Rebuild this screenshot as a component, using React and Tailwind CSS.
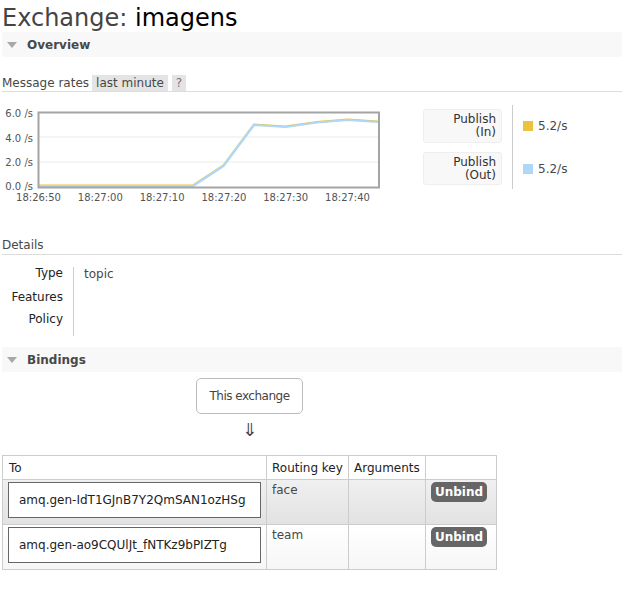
const ticks = ['18:26:50', '18:27:00', '18:27:10', '18:27:20', '18:27:30', '18:27:40'];
const yLabels = [
  { label: '6.0 /s', y: 11.6 },
  { label: '4.0 /s', y: 36.6 },
  { label: '2.0 /s', y: 60.6 },
  { label: '0.0 /s', y: 84.6 },
];
const points = [
  [39, 81], [193, 81], [223.5, 61], [254, 20], [285.5, 22], [317, 17.5], [347.5, 15], [378, 17],
];

const bindings = [
  { to: 'amq.gen-IdT1GJnB7Y2QmSAN1ozHSg', key: 'face', alt: true },
  { to: 'amq.gen-ao9CQUlJt_fNTKz9bPIZTg', key: 'team', alt: false },
];

function SectionBar({ title }) {
  return (
    <div className="h-[25px] bg-[#f8f8f8] flex items-center">
      <svg className="ml-[5px]" width="10" height="6" viewBox="0 0 10 6">
        <path d="M0 0h10L5 6z" fill="#a8a8a8" />
      </svg>
      <span className="ml-[10px] font-bold text-[#484848]">{title}</span>
    </div>
  );
}

function RateChart() {
  const line = points.map((p) => p.join(',')).join(' ');
  const lineYellow = points.map(([x, y]) => `${x},${y - 0.6}`).join(' ');
  return (
    <svg className="-ml-[2px] shrink-0" width="400" height="100" viewBox="0 0 400 100">
      <line x1="39" y1="32" x2="378" y2="32" stroke="#ebebeb" strokeWidth="1" />
      <line x1="39" y1="57" x2="378" y2="57" stroke="#ebebeb" strokeWidth="1" />
      <polyline points={lineYellow} fill="none" stroke="#edc240" strokeWidth="2" strokeLinejoin="round" />
      <polyline points={line} fill="none" stroke="#afd8f8" strokeWidth="2.2" strokeLinejoin="round" />
      <rect x="38.5" y="7.5" width="340.5" height="75" fill="none" stroke="#a4a4a4" strokeWidth="2" />
      {yLabels.map((l) => (
        <text key={l.label} x="33" y={l.y} textAnchor="end" fontSize="10" fill="#545454" fontFamily="DejaVu Sans, sans-serif">
          {l.label}
        </text>
      ))}
      {ticks.map((t, i) => (
        <text key={t} x={38.5 + 61.8 * i} y="95.6" textAnchor="middle" fontSize="10" fill="#545454" fontFamily="DejaVu Sans, sans-serif">
          {t}
        </text>
      ))}
    </svg>
  );
}

function Legend() {
  const rows = [
    { top: 'Publish', bottom: '(In)', color: 'bg-[#edc240]', h: 'h-[34px]' },
    { top: 'Publish', bottom: '(Out)', color: 'bg-[#afd8f8]', h: 'h-[33px]' },
  ];
  return (
    <div className="ml-[23px] flex">
      <div className="w-[79px] pt-[4px] flex flex-col gap-[9px]">
        {rows.map((r) => (
          <div key={r.bottom} className={`${r.h} bg-[#f8f8f8] border border-[#eeeeee] rounded-[3px] flex flex-col justify-center items-end pr-[5px] leading-[13px] text-[#333]`}>
            <span>{r.top}</span>
            <span>{r.bottom}</span>
          </div>
        ))}
      </div>
      <div className="ml-[10px] h-[84px] border-l border-[#cccccc] pl-[10px] pt-[4px] flex flex-col gap-[9px]">
        {rows.map((r) => (
          <div key={r.bottom} className={`${r.h} flex items-center`}>
            <span className={`w-[10px] h-[10px] ${r.color}`} />
            <span className="ml-[5px] text-[#484848]">5.2/s</span>
          </div>
        ))}
      </div>
    </div>
  );
}

export default function App() {
  return (
    <div className="w-[622px] min-h-[597px] bg-white pl-[2px] font-['DejaVu_Sans',sans-serif] text-[12px] text-[#484848]">
      <h1 className="h-[32px] pt-[5px] leading-[27px] text-[24px] font-normal">
        <span className="text-[#444]">Exchange:</span> <span className="text-black">imagens</span>
      </h1>

      <SectionBar title="Overview" />

      {/* Message rates */}
      <div className="mt-[18px] flex items-stretch h-[17px] leading-[16px] border-b border-[#dddddd]">
        <span>Message rates</span>
        <span className="ml-[3px] px-[4px] bg-[#e4e4e4] text-[#484848]">last minute</span>
        <span className="ml-[4px] px-[4px] bg-[#e4e4e4] text-[#777]">?</span>
      </div>

      <div className="mt-[13px] flex">
        <RateChart />
        <Legend />
      </div>

      {/* Details */}
      <div className="mt-[33px] leading-[14px] pb-[2px] border-b border-[#dddddd]">Details</div>
      <div className="mt-[11px] flex leading-[14px]">
        <div className="w-[61px] flex flex-col items-end text-[#222]">
          <span>Type</span>
          <span className="mt-[10px]">Features</span>
          <span className="mt-[8px]">Policy</span>
        </div>
        <div className="ml-[10px] mt-[1px] h-[69px] border-l border-[#cccccc] pl-[10px]">topic</div>
      </div>

      <div className="mt-[11px]">
        <SectionBar title="Bindings" />
      </div>

      <div className="ml-[194px] w-[107px] flex flex-col items-center">
        <div className="mt-[6px] w-[107px] h-[36px] border border-[#bbbbbb] rounded-[5px] flex items-center justify-center tracking-[-0.5px] text-[#444]">
          This exchange
        </div>
        <div className="mt-[6px] h-[20px] leading-[20px] text-[18px] text-[#444]">⇓</div>
      </div>

      <table className="mt-[15px] w-[494px] table-fixed border-collapse">
        <colgroup>
          <col className="w-[264px]" />
          <col className="w-[82px]" />
          <col className="w-[77px]" />
          <col className="w-[71px]" />
        </colgroup>
        <thead>
          <tr className="text-left text-[#222] whitespace-nowrap">
            <th className="border border-[#cccccc] font-normal px-[6px] h-[24px] leading-[22px]">To</th>
            <th className="border border-[#cccccc] font-normal pl-[5px] pr-0 h-[24px] leading-[22px]">Routing key</th>
            <th className="border border-[#cccccc] font-normal pl-[5px] pr-0 h-[24px] leading-[22px]">Arguments</th>
            <th className="border border-[#cccccc] font-normal px-[6px] h-[24px] leading-[22px]"></th>
          </tr>
        </thead>
        <tbody>
          {bindings.map((b) => (
            <tr
              key={b.to}
              className={b.alt ? 'bg-gradient-to-b from-[#f0f0f0] to-[#e2e2e2]' : 'bg-gradient-to-b from-[#ffffff] to-[#f6f6f6]'}
            >
              <td className="border border-[#cccccc] align-top pl-[5px] pr-[4px] pt-[2px] pb-[6px]">
                <div className="w-[253px] h-[36px] border border-[#666666] bg-white flex items-center pl-[10px] text-[#222] whitespace-nowrap">
                  {b.to}
                </div>
              </td>
              <td className="border border-[#cccccc] align-top px-[5px] pt-[2px] leading-[16px]">{b.key}</td>
              <td className="border border-[#cccccc] align-top"></td>
              <td className="border border-[#cccccc] align-top pl-[5px] pt-[2px]">
                <button className="w-[56px] h-[20px] rounded-[5px] bg-[#666666] text-white font-bold text-[12px] leading-[20px]">
                  Unbind
                </button>
              </td>
            </tr>
          ))}
        </tbody>
      </table>
    </div>
  );
}
